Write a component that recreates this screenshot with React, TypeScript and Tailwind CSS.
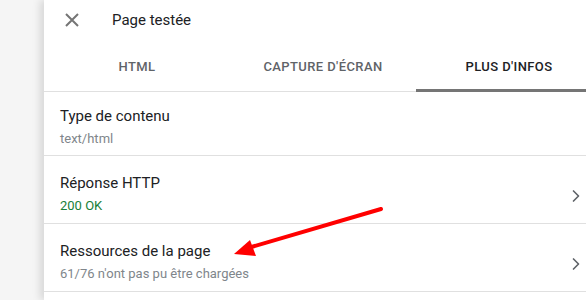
import { ChevronRight } from 'lucide-react'

const rows = [
  { title: 'Type de contenu', sub: 'text/html', subClass: 'text-[#80868b]', chevron: false, box: 'h-[64px] pt-[12px]' },
  { title: 'Réponse HTTP', sub: '200 OK', subClass: 'text-[#188038]', chevron: true, box: 'h-[68px] pt-[15px]' },
  { title: 'Ressources de la page', sub: "61/76 n'ont pas pu être chargées", subClass: 'text-[#80868b]', chevron: true, box: 'h-[68px] pt-[15px]' },
]

const tabs = [
  { label: 'HTML', active: false },
  { label: "CAPTURE D'ÉCRAN", active: false },
  { label: "PLUS D'INFOS", active: true },
]

export default function App() {
  return (
    <div className="relative flex h-[300px] w-[586px] overflow-hidden bg-[#f5f5f5] font-['Roboto',sans-serif]">
      <div className="w-[44px] shrink-0" />
      <div className="flex w-[558px] shrink-0 flex-col bg-white shadow-[-4px_0_8px_rgba(0,0,0,0.12)]">
        {/* Header */}
        <div className="flex h-[40px] items-center">
          <svg className="ml-[21px] h-[14px] w-[14px]" viewBox="0 0 14 14">
            <path d="M1 1L13 13M13 1L1 13" stroke="#757575" strokeWidth="2" fill="none" />
          </svg>
          <span className="ml-[33px] text-[15px] text-[#202124]">Page testée</span>
        </div>

        {/* Tabs */}
        <div className="flex h-[52px] border-b border-[#e0e0e0]">
          {tabs.map((t) => (
            <div key={t.label} className="relative flex w-[186px] items-center justify-center pt-[2px]">
              <span
                className={`text-[13px] font-medium tracking-[0.4px] ${t.active ? 'text-[#202124]' : 'text-[#5f6368]'}`}
              >
                {t.label}
              </span>
              {t.active && <div className="absolute bottom-[-1px] left-0 right-0 h-[3px] bg-[#757575]" />}
            </div>
          ))}
        </div>

        {/* Rows */}
        {rows.map((r) => (
          <div key={r.title} className={`flex items-start border-b border-[#e0e0e0] pl-[16px] pr-[16px] ${r.box}`}>
            <div className="flex flex-1 flex-col">
              <span className="text-[15px] leading-[24px] text-[#202124]">{r.title}</span>
              <span className={`text-[13px] leading-[21px] ${r.subClass}`}>{r.sub}</span>
            </div>
            {r.chevron && <ChevronRight className="mt-[15px] h-[20px] w-[20px] text-[#5f6368]" strokeWidth={2} />}
          </div>
        ))}
      </div>

      {/* Annotation arrow */}
      <svg className="pointer-events-none absolute left-0 top-0" width="586" height="300">
        <line x1="381" y1="209" x2="248" y2="248" stroke="#ff0000" strokeWidth="4" strokeLinecap="round" />
        <polygon points="234,254 250,240 256,256" fill="#ff0000" />
      </svg>
    </div>
  )
}
